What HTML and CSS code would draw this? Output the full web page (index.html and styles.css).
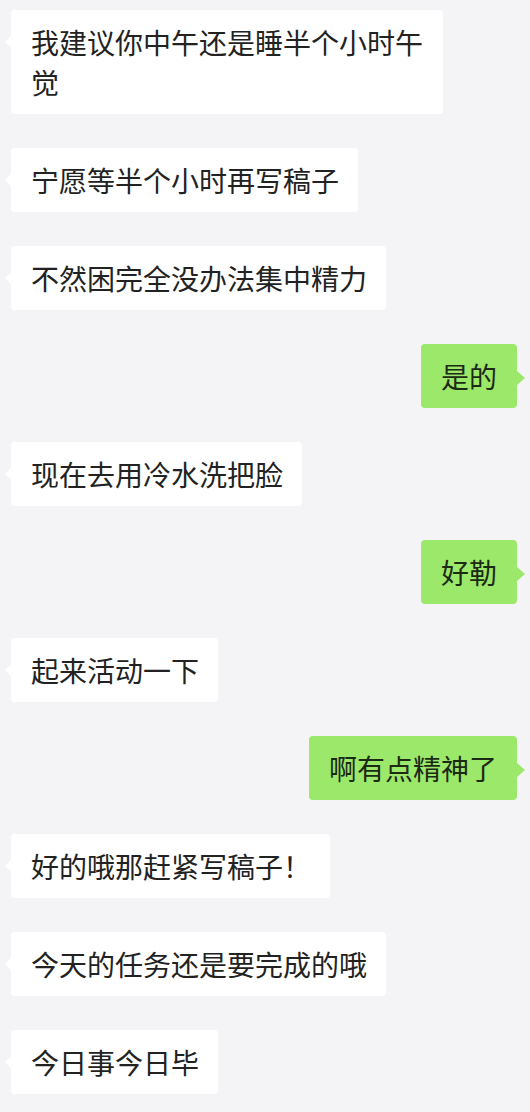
FILE: index.html
```html
<!DOCTYPE html>
<html lang="zh-CN">
<head>
	<meta charset="UTF-8">
	<title>聊天记录</title>
	<link rel="stylesheet" href="styles.css">
</head>
<body>
<div class="chat">
	<p class="msg left">我建议你中午还是睡半个小时午觉</p>
	<p class="msg left">宁愿等半个小时再写稿子</p>
	<p class="msg left">不然困完全没办法集中精力</p>
	<p class="msg right">是的</p>
	<p class="msg left">现在去用冷水洗把脸</p>
	<p class="msg right">好勒</p>
	<p class="msg left">起来活动一下</p>
	<p class="msg right">啊有点精神了</p>
	<p class="msg left">好的哦那赶紧写稿子！</p>
	<p class="msg left">今天的任务还是要完成的哦</p>
	<p class="msg left">今日事今日毕</p>
</div>
</body>
</html>
```

FILE: styles.css
```css
body{
	margin: 0;
	background: #f4f4f6;
	font-family: 'Noto Sans CJK SC', 'Microsoft YaHei', sans-serif;
}
.chat{
	display: flex;
	flex-direction: column;
	gap: 34px;
	padding: 10px 13px 0 11px;
}
.msg{
	position: relative;
	margin: 0;
	max-width: 432px;
	box-sizing: border-box;
	padding: 12px 19px 12px 20px;
	font-size: 28px;
	line-height: 40px;
	color: #222;
	border-radius: 4px;
	word-break: break-all;
}
.msg:before{
	content: '';
	position: absolute;
	top: 26px;
	width: 0;
	height: 0;
	border-top: 6px solid transparent;
	border-bottom: 6px solid transparent;
}
.left{
	align-self: flex-start;
	background: #fff;
}
.left:before{
	left: -6px;
	border-right: 6px solid #fff;
}
.right{
	align-self: flex-end;
	padding: 12px 20px;
	background: #9ce86a;
	color: #1c2a14;
}
.right:before{
	right: -8px;
	top: 27px;
	border-top-width: 7px;
	border-bottom-width: 7px;
	border-left: 8px solid #9ce86a;
}
```
